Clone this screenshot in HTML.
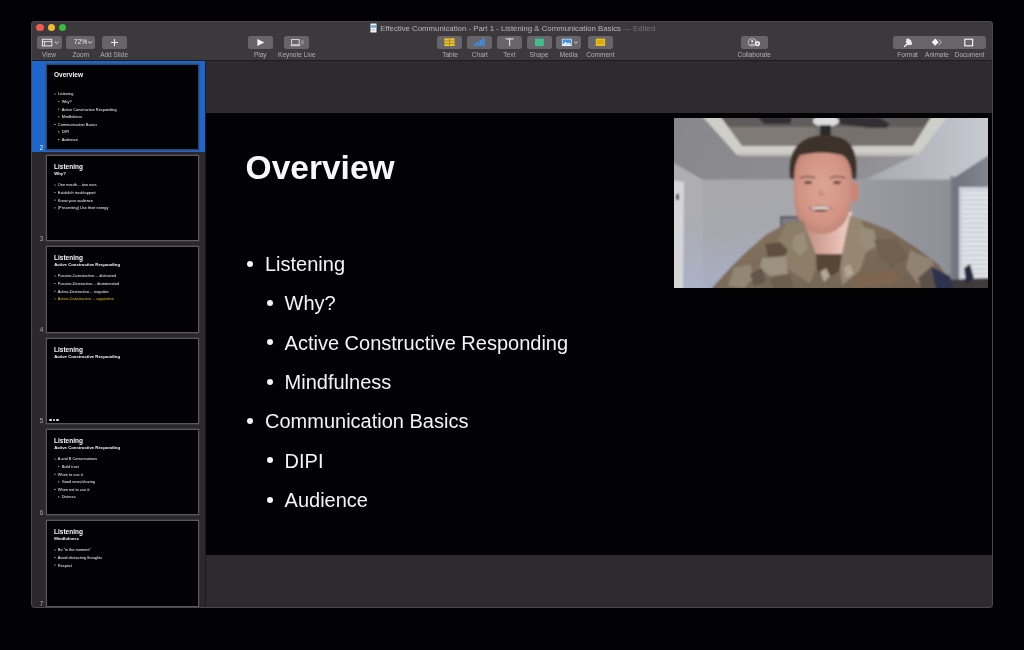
<!DOCTYPE html>
<html><head><meta charset="utf-8">
<style>
*{margin:0;padding:0;box-sizing:border-box}
html,body{width:1024px;height:650px;overflow:hidden;background:#020104;font-family:"Liberation Sans",sans-serif}
#win{will-change:transform;position:absolute;left:31px;top:21px;width:961.5px;height:586.5px;border-radius:4px;background:#2c2b2e;overflow:hidden}
#frame{position:absolute;left:31px;top:21px;width:961.5px;height:586.5px;border-radius:4px;border:1px solid #4a484c;pointer-events:none}
#tb{position:absolute;left:0;top:0;width:962px;height:40px;background:#3b393c;border-bottom:1px solid #1d1c1f}
.tl{position:absolute;top:3.1px;width:7.3px;height:7.3px;border-radius:50%}
.btn{position:absolute;top:15px;height:12.6px;background:#67656a;border-radius:2.5px}
.btn svg{position:absolute;left:0;top:0}
.lbl{position:absolute;top:29.6px;width:60px;margin-left:-30px;text-align:center;font-size:6.5px;color:#b0aeb1;white-space:nowrap;line-height:8px}
#title{position:absolute;top:3px;left:349.2px;font-size:7.8px;color:#b7b5b8;white-space:nowrap;line-height:10px}
#side{position:absolute;left:1px;top:40px;width:174px;height:547px;background:#2b282d;border-right:1px solid #1c1b1e;overflow:hidden}
#sel{position:absolute;left:0;top:0;width:173px;height:91.3px;background:#1e66cc}
.th{position:absolute;left:13.5px;width:153px;height:86.5px;background:#020104;border:1px solid #59585b;box-shadow:0 0 0.6px 0.4px #47454a;overflow:hidden}
.th.s{border-color:#26467e}
.num{position:absolute;left:7.5px;font-size:7px;color:#a3a1a4;line-height:8px}
.slide{position:absolute;left:0;top:0;width:787px;height:442px;background:#020104;color:#f7f7f7;transform-origin:0 0}
.t1{position:absolute;left:39.6px;top:34.6px;font-size:33.5px;font-weight:bold;line-height:40px;white-space:nowrap}
.t2{position:absolute;left:39.6px;top:39px;font-size:33.5px;font-weight:bold;line-height:40px;white-space:nowrap}
.st{position:absolute;left:40px;top:78px;font-size:22px;font-weight:bold;line-height:26px;white-space:nowrap}
.li{position:absolute;font-size:20px;line-height:24px;white-space:nowrap}
.bu{position:absolute;width:6px;height:6px;border-radius:50%}
.dots{position:absolute;left:2.6px;top:80.2px;width:12px;height:3px}
.dots i{position:absolute;top:0;width:2.6px;height:2.6px;border-radius:50%;background:#e6e6e6}
#canvas{position:absolute;left:175px;top:40px;width:787px;height:547px;background:#2e2b2f}
#main{top:52px}
#cam{position:absolute;left:468px;top:4.5px;width:314px;height:170px;overflow:hidden;background:#8f8f93}
</style></head><body>
<div id="win">
  <div id="tb">
    <div class="tl" style="left:5.3px;background:#f25a50"></div>
    <div class="tl" style="left:16.8px;background:#f0bb2c"></div>
    <div class="tl" style="left:28px;background:#36bb3a"></div>
    <div id="title"><svg width="7" height="10" style="position:absolute;left:-10px;top:-1px" viewBox="0 0 7 10"><rect x="0.5" y="0.5" width="6" height="9" fill="#f4f6f8"/><rect x="1" y="2" width="5" height="3" fill="#74b8dd"/><rect x="2" y="6.5" width="3" height="0.8" fill="#999"/></svg>Effective Communication - Part 1 - Listening &amp; Communication Basics <span style="color:#757377">— Edited</span></div>
    <!-- buttons -->
    <div class="btn" style="left:6px;width:24.5px"><svg width="25" height="13" viewBox="0 0 25 13"><rect x="5.4" y="3.3" width="9.4" height="6.6" fill="none" stroke="#e6e6e6" stroke-width="1"/><line x1="5.4" y1="5.6" x2="14.8" y2="5.6" stroke="#e6e6e6" stroke-width="0.9"/><line x1="7.6" y1="5.6" x2="7.6" y2="9.9" stroke="#e6e6e6" stroke-width="0.9"/><path d="M17.8 5.6 L19.7 7.4 L21.6 5.6" fill="none" stroke="#e6e6e6" stroke-width="0.9"/></svg></div>
    <div class="btn" style="left:35.2px;width:29px"><span style="position:absolute;left:7.6px;top:2.4px;font-size:6.7px;line-height:8px;color:#ebebeb">72%</span><svg width="29" height="13" viewBox="0 0 29 13"><path d="M22.2 5.3 L24.2 7.3 L26.2 5.3" fill="none" stroke="#e6e6e6" stroke-width="0.9"/></svg></div>
    <div class="btn" style="left:70.8px;width:25px"><svg width="25" height="13" viewBox="0 0 25 13"><path d="M12.5 3 V10 M9 6.5 H16" stroke="#f0f0f0" stroke-width="1.1"/></svg></div>
    <div class="btn" style="left:216.8px;width:25px"><svg width="25" height="13" viewBox="0 0 25 13"><path d="M9.4 3 L16.4 6.5 L9.4 10 Z" fill="#f2f2f2"/></svg></div>
    <div class="btn" style="left:253.1px;width:25.4px"><svg width="26" height="13" viewBox="0 0 26 13"><rect x="7.6" y="3.6" width="7.6" height="5.2" fill="none" stroke="#e4e4e4" stroke-width="0.9"/><path d="M6.5 9.7 H16.3" stroke="#e4e4e4" stroke-width="0.9"/><path d="M17.4 4.5 Q18.4 6.3 17.4 8.1 M18.8 4 Q20 6.3 18.8 8.6" fill="none" stroke="#bbb" stroke-width="0.6"/></svg></div>
    <div class="btn" style="left:406.3px;width:25.2px"><svg width="26" height="13" viewBox="0 0 26 13"><rect x="7.4" y="2.3" width="10.2" height="7.8" fill="#e9c32a"/><path d="M7.4 4.9 H17.6 M7.4 7.5 H17.6 M12.5 2.3 V10.1" stroke="#8a6e12" stroke-width="0.6"/></svg></div>
    <div class="btn" style="left:436.1px;width:24.9px"><svg width="25" height="13" viewBox="0 0 25 13"><rect x="6.9" y="7.6" width="2" height="2.4" fill="#3d8ff0"/><rect x="9.7" y="6" width="2" height="4" fill="#3d8ff0"/><rect x="12.5" y="4" width="2" height="6" fill="#3d8ff0"/><rect x="15.3" y="2.3" width="2.2" height="7.7" fill="#3d8ff0"/></svg></div>
    <div class="btn" style="left:465.9px;width:24.9px"><svg width="25" height="13" viewBox="0 0 25 13"><path d="M8.8 2.9 H16.6 M12.7 2.9 V10" stroke="#f0f0f0" stroke-width="1"/></svg></div>
    <div class="btn" style="left:495.6px;width:25.1px"><svg width="26" height="13" viewBox="0 0 26 13"><rect x="8" y="2.6" width="8.8" height="7.5" fill="#41c08c"/></svg></div>
    <div class="btn" style="left:525.1px;width:24.9px"><svg width="25" height="13" viewBox="0 0 25 13"><rect x="5.9" y="2.8" width="9.8" height="7.2" fill="#f2f6fa"/><rect x="6.6" y="3.4" width="8.4" height="5" fill="#3f90e6"/><path d="M6.6 8.4 L9.5 5.8 L11.5 7.4 L13 6.4 L15 8.4 Z" fill="#e8f1f8"/><path d="M18 5.6 L19.8 7.3 L21.6 5.6" fill="none" stroke="#e6e6e6" stroke-width="0.9"/></svg></div>
    <div class="btn" style="left:556.9px;width:24.9px"><svg width="25" height="13" viewBox="0 0 25 13"><rect x="7.8" y="2.6" width="9.3" height="7.4" fill="#eec21d"/><rect x="9" y="3.8" width="6.9" height="4.6" fill="#d9a915"/></svg></div>
    <div class="btn" style="left:710px;width:26.5px"><svg width="27" height="13" viewBox="0 0 27 13"><circle cx="11.2" cy="6.4" r="3.9" fill="none" stroke="#d9d9d9" stroke-width="0.8"/><circle cx="11.2" cy="5.2" r="1.2" fill="#d9d9d9"/><path d="M9.3 9 Q11.2 6.4 13.1 9" fill="#d9d9d9"/><circle cx="16.4" cy="7.6" r="2.7" fill="#e8e8e8"/><circle cx="16.4" cy="7.6" r="0.9" fill="#67656a"/></svg></div>
    <div class="btn" style="left:862px;width:92.8px"><svg width="93" height="13" viewBox="0 0 93 13"><path d="M13.6 2.4 Q16.5 2.2 18 4.6 L19.4 8.6 L15.2 9.2 L13 6.2 Z" fill="#ececec"/><path d="M13.8 7.2 L10.6 10.6 L11.6 11.2 L15 8.4 Z" fill="#ececec"/><path d="M42.2 2.6 L45.7 6.2 L42.2 9.8 L38.7 6.2 Z" fill="#f4f4f4"/><path d="M45.6 3.2 L48.4 6.2 L45.6 9.2" fill="none" stroke="#d6d6d6" stroke-width="0.8"/><rect x="71.8" y="3.2" width="7.8" height="6.6" fill="none" stroke="#f0f0f0" stroke-width="1.2"/><rect x="73" y="4.4" width="5.4" height="4.2" fill="#67656a"/></svg></div>
    <!-- labels -->
    <div class="lbl" style="left:18px">View</div>
    <div class="lbl" style="left:49.75px">Zoom</div>
    <div class="lbl" style="left:83.1px">Add Slide</div>
    <div class="lbl" style="left:229.3px">Play</div>
    <div class="lbl" style="left:265.85px">Keynote Live</div>
    <div class="lbl" style="left:419px">Table</div>
    <div class="lbl" style="left:448.8px">Chart</div>
    <div class="lbl" style="left:478.3px">Text</div>
    <div class="lbl" style="left:508px">Shape</div>
    <div class="lbl" style="left:537.7px">Media</div>
    <div class="lbl" style="left:569.4px">Comment</div>
    <div class="lbl" style="left:723.2px">Collaborate</div>
    <div class="lbl" style="left:876.6px">Format</div>
    <div class="lbl" style="left:906px">Animate</div>
    <div class="lbl" style="left:938.5px">Document</div>
  </div>
  <div id="side">
    <div id="sel"></div>
    <div class="th s" style="top:2.60px"><div class="slide" style="transform:translate(-0.6px,-0.3px) scale(0.19377)"><div class="t1">Overview</div><div class="li" style="left:59px;top:139.00px;color:#f4f4f4">Listening</div><div class="bu" style="left:41px;top:147.50px;background:#f4f4f4"></div><div class="li" style="left:78.6px;top:178.37px;color:#f4f4f4">Why?</div><div class="bu" style="left:61px;top:186.87px;background:#f4f4f4"></div><div class="li" style="left:78.6px;top:217.74px;color:#f4f4f4">Active Constructive Responding</div><div class="bu" style="left:61px;top:226.24px;background:#f4f4f4"></div><div class="li" style="left:78.6px;top:257.11px;color:#f4f4f4">Mindfulness</div><div class="bu" style="left:61px;top:265.61px;background:#f4f4f4"></div><div class="li" style="left:59px;top:296.48px;color:#f4f4f4">Communication Basics</div><div class="bu" style="left:41px;top:304.98px;background:#f4f4f4"></div><div class="li" style="left:78.6px;top:335.85px;color:#f4f4f4">DIPI</div><div class="bu" style="left:61px;top:344.35px;background:#f4f4f4"></div><div class="li" style="left:78.6px;top:375.22px;color:#f4f4f4">Audience</div><div class="bu" style="left:61px;top:383.72px;background:#f4f4f4"></div></div></div><div class="num" style="top:82.50px;color:#dfe8f8">2</div><div class="th" style="top:93.90px"><div class="slide" style="transform:translate(-0.6px,-0.3px) scale(0.19377)"><div class="t2">Listening</div><div class="st">Why?</div><div class="li" style="left:59px;top:139.00px;color:#f4f4f4">One mouth… two ears</div><div class="bu" style="left:41px;top:147.50px;background:#f4f4f4"></div><div class="li" style="left:59px;top:178.37px;color:#f4f4f4">Establish trust/rapport</div><div class="bu" style="left:41px;top:186.87px;background:#f4f4f4"></div><div class="li" style="left:59px;top:217.74px;color:#f4f4f4">Know your audience</div><div class="bu" style="left:41px;top:226.24px;background:#f4f4f4"></div><div class="li" style="left:59px;top:257.11px;color:#f4f4f4">(Presenting) Use their energy</div><div class="bu" style="left:41px;top:265.61px;background:#f4f4f4"></div></div></div><div class="num" style="top:173.80px;">3</div><div class="th" style="top:185.20px"><div class="slide" style="transform:translate(-0.6px,-0.3px) scale(0.19377)"><div class="t2">Listening</div><div class="st">Active Constructive Responding</div><div class="li" style="left:59px;top:139.00px;color:#f4f4f4">Passive-Constructive… distracted</div><div class="bu" style="left:41px;top:147.50px;background:#f4f4f4"></div><div class="li" style="left:59px;top:178.37px;color:#f4f4f4">Passive-Destructive… disinterested</div><div class="bu" style="left:41px;top:186.87px;background:#f4f4f4"></div><div class="li" style="left:59px;top:217.74px;color:#f4f4f4">Active-Destructive… negative</div><div class="bu" style="left:41px;top:226.24px;background:#f4f4f4"></div><div class="li" style="left:59px;top:257.11px;color:#dcbc2c">Active-Constructive… supportive</div><div class="bu" style="left:41px;top:265.61px;background:#dcbc2c"></div></div></div><div class="num" style="top:265.10px;">4</div><div class="th" style="top:276.50px"><div class="slide" style="transform:translate(-0.6px,-0.3px) scale(0.19377)"><div class="t2">Listening</div><div class="st">Active Constructive Responding</div></div><div class="dots"><i style="left:0"></i><i style="left:3.5px"></i><i style="left:7px"></i></div></div><div class="num" style="top:356.40px;">5</div><div class="th" style="top:367.80px"><div class="slide" style="transform:translate(-0.6px,-0.3px) scale(0.19377)"><div class="t2">Listening</div><div class="st">Active Constructive Responding</div><div class="li" style="left:59px;top:139.00px;color:#f4f4f4">A and B Conversations</div><div class="bu" style="left:41px;top:147.50px;background:#f4f4f4"></div><div class="li" style="left:78.6px;top:178.37px;color:#f4f4f4">Build trust</div><div class="bu" style="left:61px;top:186.87px;background:#f4f4f4"></div><div class="li" style="left:59px;top:217.74px;color:#f4f4f4">When to use it:</div><div class="bu" style="left:41px;top:226.24px;background:#f4f4f4"></div><div class="li" style="left:78.6px;top:257.11px;color:#f4f4f4">Good news/sharing</div><div class="bu" style="left:61px;top:265.61px;background:#f4f4f4"></div><div class="li" style="left:59px;top:296.48px;color:#f4f4f4">When not to use it:</div><div class="bu" style="left:41px;top:304.98px;background:#f4f4f4"></div><div class="li" style="left:78.6px;top:335.85px;color:#f4f4f4">Distress</div><div class="bu" style="left:61px;top:344.35px;background:#f4f4f4"></div></div></div><div class="num" style="top:447.70px;">6</div><div class="th" style="top:459.10px"><div class="slide" style="transform:translate(-0.6px,-0.3px) scale(0.19377)"><div class="t2">Listening</div><div class="st">Mindfulness</div><div class="li" style="left:59px;top:139.00px;color:#f4f4f4">Be “in the moment”</div><div class="bu" style="left:41px;top:147.50px;background:#f4f4f4"></div><div class="li" style="left:59px;top:178.37px;color:#f4f4f4">Avoid distracting thoughts</div><div class="bu" style="left:41px;top:186.87px;background:#f4f4f4"></div><div class="li" style="left:59px;top:217.74px;color:#f4f4f4">Respect</div><div class="bu" style="left:41px;top:226.24px;background:#f4f4f4"></div></div></div><div class="num" style="top:539.00px;">7</div>
  </div>
  <div id="canvas">
    <div class="slide" id="main"><div class="t1">Overview</div><div class="li" style="left:59px;top:139.00px;color:#f4f4f4">Listening</div><div class="bu" style="left:41px;top:147.50px;background:#f4f4f4"></div><div class="li" style="left:78.6px;top:178.37px;color:#f4f4f4">Why?</div><div class="bu" style="left:61px;top:186.87px;background:#f4f4f4"></div><div class="li" style="left:78.6px;top:217.74px;color:#f4f4f4">Active Constructive Responding</div><div class="bu" style="left:61px;top:226.24px;background:#f4f4f4"></div><div class="li" style="left:78.6px;top:257.11px;color:#f4f4f4">Mindfulness</div><div class="bu" style="left:61px;top:265.61px;background:#f4f4f4"></div><div class="li" style="left:59px;top:296.48px;color:#f4f4f4">Communication Basics</div><div class="bu" style="left:41px;top:304.98px;background:#f4f4f4"></div><div class="li" style="left:78.6px;top:335.85px;color:#f4f4f4">DIPI</div><div class="bu" style="left:61px;top:344.35px;background:#f4f4f4"></div><div class="li" style="left:78.6px;top:375.22px;color:#f4f4f4">Audience</div><div class="bu" style="left:61px;top:383.72px;background:#f4f4f4"></div>
      <div id="cam"><svg width="314" height="170" viewBox="0 0 314 170">
<defs>
<filter id="bl" x="-5%" y="-5%" width="110%" height="110%"><feGaussianBlur stdDeviation="0.9"/></filter>
<linearGradient id="ceilL" x1="0" y1="0" x2="1" y2="0.3"><stop offset="0" stop-color="#88878b"/><stop offset="0.6" stop-color="#8f8e92"/><stop offset="1" stop-color="#a3a4aa"/></linearGradient>
<linearGradient id="ceilR" x1="0" y1="0" x2="1" y2="0"><stop offset="0" stop-color="#a8a9af"/><stop offset="1" stop-color="#c8cad2"/></linearGradient>
<linearGradient id="backW" x1="0" y1="0" x2="0.2" y2="1"><stop offset="0" stop-color="#a9a8ab"/><stop offset="0.5" stop-color="#a7a8ae"/><stop offset="1" stop-color="#a9b0c6"/></linearGradient>
<linearGradient id="leftW" x1="0" y1="0" x2="0" y2="1"><stop offset="0" stop-color="#b0afb1"/><stop offset="0.5" stop-color="#acadb3"/><stop offset="1" stop-color="#aab2c8"/></linearGradient>
<linearGradient id="backW2" x1="0" y1="0" x2="1" y2="0"><stop offset="0" stop-color="#9e9ea3"/><stop offset="1" stop-color="#8e9097"/></linearGradient>
<linearGradient id="rWall" x1="0" y1="0" x2="1" y2="0"><stop offset="0" stop-color="#6f727b"/><stop offset="1" stop-color="#858892"/></linearGradient>
<radialGradient id="face" cx="0.5" cy="0.45" r="0.6"><stop offset="0" stop-color="#dca595"/><stop offset="0.7" stop-color="#d29484"/><stop offset="1" stop-color="#b88272"/></radialGradient>
<linearGradient id="camo" x1="0" y1="0" x2="1" y2="1"><stop offset="0" stop-color="#857560"/><stop offset="0.5" stop-color="#7b6b58"/><stop offset="1" stop-color="#6f604f"/></linearGradient>
<pattern id="blinds" width="30" height="4.6" patternUnits="userSpaceOnUse"><rect width="30" height="4.6" fill="#e6e8ef"/><rect y="3.3" width="30" height="1.3" fill="#b8bac6"/></pattern>
</defs>
<g filter="url(#bl)">
<!-- base ceiling -->
<rect x="-2" y="-2" width="320" height="175" fill="url(#ceilL)"/>
<!-- right ceiling lighter -->
<polygon points="240,-2 318,-2 318,36 278,62 190,62 243,37" fill="url(#ceilR)"/>
<!-- tray recess -->
<polygon points="46,-2 258,-2 239,28 68,28" fill="#5f5c5b"/>
<polygon points="52,9 252,9 239,28 68,28" fill="#807a74"/>
<polygon points="140,9 252,9 239,28 150,28" fill="#76716d"/>
<!-- trim -->
<polygon points="28,-2 46,-2 68,28 239,28 258,-2 274,-2 244,37 63,37" fill="#cfcfca"/>
<polygon points="63,35 244,35 242,38 65,38" fill="#bdbcb5"/>
<!-- fan -->
<polygon points="84,-1 118,-1 116,6 90,6" fill="#302f32"/>
<polygon points="163,-1 206,0 216,6 212,10 196,10 165,6" fill="#302f32"/>
<ellipse cx="152" cy="3" rx="13" ry="6" fill="#dcdcdc"/>
<rect x="146" y="7" width="11" height="12" fill="#2c2b2e"/>
<!-- left wall -->
<polygon points="-2,44 29,62 29,172 -2,172" fill="url(#leftW)"/>
<!-- back wall -->
<rect x="29" y="61.5" width="130" height="110" fill="url(#backW)"/>
<rect x="159" y="61.5" width="120" height="110" fill="url(#backW2)"/>
<!-- right wall -->
<polygon points="278,61 318,35 318,172 278,172" fill="url(#rWall)"/>
<rect x="276.5" y="58" width="3" height="114" fill="#7a7c84"/>
<!-- window -->
<rect x="285" y="69" width="31" height="100" fill="#c9cbd6"/>
<rect x="288" y="71" width="28" height="96" fill="url(#blinds)"/>
<!-- door frame -->
<polygon points="-2,62 10,64 9,172 -2,172" fill="#d6d6d8"/>
<rect x="2" y="76" width="3" height="6" fill="#333"/>
<!-- picture frame -->
<rect x="106" y="98" width="20" height="13" fill="#58585c"/>
<rect x="108" y="100" width="16" height="9" fill="#7c7c80"/>
<!-- desk objects bottom right -->
<polygon points="272,162 316,160 316,172 270,172" fill="#3c3a3b"/>
<polygon points="290,150 296,146 300,160 292,166" fill="#26273a"/>
<!-- neck -->
<linearGradient id="neckg" x1="0" y1="0" x2="1" y2="0"><stop offset="0" stop-color="#bb8a7c"/><stop offset="0.6" stop-color="#dfb3a6"/><stop offset="1" stop-color="#f0d2ca"/></linearGradient>
<polygon points="127,94 178,94 169,142 141,142" fill="url(#neckg)"/>
<!-- ears -->
<ellipse cx="180.5" cy="74" rx="4.2" ry="11" fill="#c98676"/>

<!-- face -->
<path d="M120,56 L120,42 Q122,33 148,32 Q175,33 177,42 L178,70 Q178,93 171,104 Q161,116 148.5,116 Q135,116 126,104 Q120,94 120,76 Z" fill="url(#face)"/>
<!-- hair -->
<path d="M116,60 Q112,30 134,20 Q150,14 168,20 Q186,28 182,62 L178,60 Q177,42 168,37 Q148,32 126,37 Q120,44 120,62 Z" fill="#3d302b"/>
<!-- eyes / brows / mouth -->
<path d="M126,60 Q133,57 141,60" stroke="#6b4b40" stroke-width="1.6" fill="none"/>
<path d="M156,60 Q163,57 171,60" stroke="#6b4b40" stroke-width="1.6" fill="none"/>
<ellipse cx="134" cy="64.5" rx="4" ry="1.6" fill="#5a3e38"/>
<ellipse cx="163" cy="64.5" rx="4" ry="1.6" fill="#5a3e38"/>
<path d="M146,70 L144,78 L152,78 Z" fill="#c98070" opacity="0.6"/>
<path d="M134.5,90 Q147,86 158,90 Q147,98 134.5,90 Z" fill="#7a4a44"/>
<path d="M137,89.8 Q147,87.8 156,89.8 L155,91.5 Q147,90.5 138,91.5 Z" fill="#eee6e2"/>
<!-- body uniform -->
<polygon points="36,172 56,150 73,133 93,116 113,105 129,103 142,137 168,137 176,98 195,104 217,113 244,131 265,147 281,172" fill="url(#camo)"/>
<!-- tshirt -->
<polygon points="141,136 169,136 166,152 158,158 148,158 143,152" fill="#574636"/>
<!-- collars -->
<polygon points="113,104.5 129,103 142,137 142,150 136,165.5 116,152.5 101,127.5" fill="#8c7e69"/>
<polygon points="176,98 186,100.5 196,122.5 186,152.5 168,167.5 166,150 168,137" fill="#968773"/>
<!-- camo patches -->
<polygon points="91,126 106,124 114,132 110,140 94,140" fill="#5e4f43"/>
<polygon points="88,140 112,138 114,156 96,158 86,150" fill="#9d9282"/>
<polygon points="60,150 76,146 80,160 70,170 54,168" fill="#938672"/>
<polygon points="120,118 130,114 134,130 126,138 118,130" fill="#9a8d7a"/>
<polygon points="186,108 200,112 204,128 192,134 186,122" fill="#988b77"/>
<polygon points="200,122 222,120 234,140 218,150 206,140" fill="#6f604f"/>
<polygon points="236,132 258,142 262,160 244,166 232,150" fill="#918371"/>
<polygon points="96,160 116,156 120,170 100,172" fill="#6d5d4c"/>
<polygon points="76,156 88,150 92,164 80,168" fill="#64554a"/>
<polygon points="146,154 152,150 156,158 150,164" fill="#b0a494"/>
<polygon points="170,150 176,146 180,156 172,160" fill="#b0a494"/>
<!-- name tape -->
<polygon points="180,158 222,152 224,166 182,170" fill="#7d6550"/>
<!-- patch -->
<polygon points="256,148 276,158 280,172 262,172" fill="#2e3350"/>
<polygon points="244,160 256,150 262,172 248,172" fill="#5b5148"/>
</g>
</svg>
</div>
    </div>
  </div>
</div>
<div id="frame"></div>
</body></html>
